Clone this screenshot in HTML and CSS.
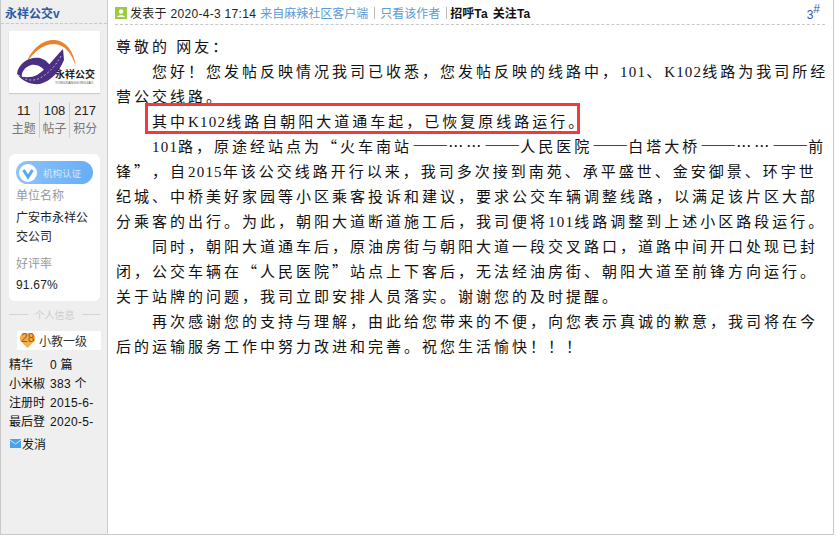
FILE: index.html
```html
<!DOCTYPE html>
<html lang="zh-CN">
<head>
<meta charset="utf-8">
<title>永祥公交</title>
<link rel="stylesheet" href="styles.css">
</head>
<body>
<div class="frame">
  <aside class="side">
    <div class="name">永祥公交v</div>
    <div class="avatar">
      <svg class="logo" width="91" height="62" viewBox="0 0 91 62">
        <path d="M17 33C22 18 34 8 46 9C57 10 65 20 67 36C63 22 55 13 45 13C34 13 24 21 17 33Z" fill="#e8832a"/>
        <path d="M8 43C9 32 21 25 31 27C38 29 42 34 44 41L38 43C34 36 28 33 22 34C16 36 12 41 13 46Z" fill="#4b2f83"/>
        <path d="M54 18L55 29C50 41 42 50 31 53C22 54 13 50 9 44C14 47 22 47 28 44C38 38 44 28 54 18Z" fill="#4b2f83"/>
        <path d="M52 25C46 36 38 44 29 48C24 50 18 49 14 47" fill="none" stroke="#d8d2e8" stroke-width="0.8" stroke-dasharray="2 2"/>
        <text class="logo-cn" x="46" y="47">永祥公交</text>
        <text class="logo-en" x="46" y="53">YONGXIANGGONGJIAO</text>
      </svg>
    </div>
    <div class="stats">
      <div class="stat"><span class="num">11</span><span class="lab">主题</span></div>
      <div class="stat"><span class="num">108</span><span class="lab">帖子</span></div>
      <div class="stat"><span class="num">217</span><span class="lab">积分</span></div>
    </div>
    <div class="card">
      <div class="pill">
        <svg class="v" width="18" height="18" viewBox="0 0 18 18">
          <circle cx="9" cy="9" r="9" fill="#fff"/>
          <path d="M4.5 6L9 13L13.5 6" fill="none" stroke="#5aa6f2" stroke-width="3"/>
        </svg>
        <span>机构认证</span>
      </div>
      <div class="key">单位名称</div>
      <div class="val">广安市永祥公交公司</div>
      <div class="key">好评率</div>
      <div class="val">91.67%</div>
    </div>
    <div class="divider"><span>个人信息</span></div>
    <div class="level">
      <svg class="medal" width="17" height="17" viewBox="0 0 16 16"><path d="M1 4L4 1H12L15 4V8L8 15L1 8Z" fill="#f0b050"/></svg>
      <span class="lv-num">28</span>
      <span class="lv-name">小教一级</span>
    </div>
    <ul class="facts">
      <li><span class="fk">精华</span><span>0 篇</span></li>
      <li><span class="fk">小米椒</span><span>383 个</span></li>
      <li><span class="fk">注册时</span><span>2015-6-</span></li>
      <li><span class="fk">最后登</span><span>2020-5-</span></li>
    </ul>
    <div class="msg">
      <svg width="11" height="9" viewBox="0 0 11 9"><rect width="11" height="9" fill="#4aa3e8"/><path d="M0 1L5.5 5L11 1" fill="none" stroke="#cfe8fb"/></svg>
      <span>发消</span>
    </div>
  </aside>
  <main class="post">
    <header class="meta">
      <svg class="usericon" width="12" height="12" viewBox="0 0 12 12"><rect width="12" height="12" fill="#9ccc3c"/><circle cx="6" cy="4.5" r="2.2" fill="#fff"/><path d="M2 10C3 7.5 9 7.5 10 10Z" fill="#fff"/></svg>
      <span class="when">发表于 2020-4-3 17:14</span>
      <a class="link">来自麻辣社区客户端</a>
      <i class="pipe"></i>
      <a class="link">只看该作者</a>
      <i class="pipe"></i>
      <b>招呼Ta</b>
      <b class="follow">关注Ta</b>
      <span class="floor">3<sup>#</sup></span>
    </header>
    <div class="body">
      <p class="plain">尊敬的 网友：</p>
      <p>您好！您发帖反映情况我司已收悉，您发帖反映的线路中，<span class="lat">101</span>、<span class="lat">K102</span>线路为我司所经营公交线路。</p>
      <p>其中<span class="lat">K102</span>线路自朝阳大道通车起，已恢复原线路运行。</p>
      <p><span class="lat">101</span>路，原途经站点为“火车南站<span class="dash">——</span>……<span class="dash">——</span>人民医院<span class="dash">——</span>白塔大桥<span class="dash">——</span>……<span class="dash">——</span>前锋”，自<span class="lat">2015</span>年该公交线路开行以来，我司多次接到南苑、承平盛世、金安御景、环宇世纪城、中桥美好家园等小区乘客投诉和建议，要求公交车辆调整线路，以满足该片区大部分乘客的出行。为此，朝阳大道断道施工后，我司便将<span class="lat">101</span>线路调整到上述小区路段运行。</p>
      <p>同时，朝阳大道通车后，原油房街与朝阳大道一段交叉路口，道路中间开口处现已封闭，公交车辆在“人民医院”站点上下客后，无法经油房街、朝阳大道至前锋方向运行。关于站牌的问题，我司立即安排人员落实。谢谢您的及时提醒。</p>
      <p>再次感谢您的支持与理解，由此给您带来的不便，向您表示真诚的歉意，我司将在今后的运输服务工作中努力改进和完善。祝您生活愉快！！！</p>
      <div class="mark"></div>
    </div>
  </main>
</div>
</body>
</html>
```
FILE: styles.css
```css
* { box-sizing: border-box; }
html, body { margin: 0; padding: 0; }
body {
  width: 836px;
  height: 536px;
  background: #fff;
  overflow: hidden;
  font-family: "Liberation Sans", "Noto Sans CJK SC", sans-serif;
  font-size: 12px;
  color: #111;
}
.frame {
  display: flex;
  width: 834px;
  height: 535px;
  border-left: 1px solid #c9c9c9;
  border-right: 1px solid #c9c9c9;
  border-bottom: 1px solid #c9c9c9;
}
.side {
  flex: none;
  width: 107px;
  background: #efefef;
  border-right: 1px solid #cdcdcd;
  display: flex;
  flex-direction: column;
}
.name {
  height: 24px;
  padding: 7px 0 0 4px;
  line-height: 15px;
  font-weight: 700;
  color: #2a5caa;
  border-bottom: 1px dashed #c8c8c8;
}
.avatar {
  flex: none;
  margin: 7px 7px 0 8px;
  height: 62px;
  background: #fff;
  box-shadow: 0 1px 1px #ccc;
}
.logo { display: block; }
.logo-cn { font-size: 10px; font-weight: 700; fill: #222; font-family: "Noto Sans CJK SC", sans-serif; }
.logo-en { font-size: 3.4px; fill: #555; font-family: "Liberation Sans", sans-serif; }
.stats {
  flex: none;
  display: flex;
  margin: 9px 7px 0 8px;
  height: 36px;
}
.stat {
  flex: 1;
  display: flex;
  flex-direction: column;
  align-items: center;
  border-left: 1px solid #cfcfcf;
}
.stat:first-child { border-left: 0; }
.num { font-size: 13px; line-height: 18px; color: #222; }
.lab { font-size: 12px; line-height: 18px; color: #777; }
.card {
  flex: none;
  margin: 16px 7px 0 8px;
  height: 147px;
  background: #fff;
  border-radius: 6px;
  padding: 7px 7px 0 7px;
}
.pill {
  display: flex;
  align-items: center;
  gap: 6px;
  height: 23px;
  padding-left: 3px;
  border-radius: 12px;
  background: linear-gradient(90deg, #8fc3fb, #66aef6);
  color: #d7e8fb;
  font-size: 9.5px;
}
.key { margin-top: 2px; line-height: 20px; color: #999; }
.val { margin-top: 3px; line-height: 19px; color: #222; width: 76px; }
.val:last-child { margin-top: 2px; letter-spacing: 0.2px; }
.val + .key { margin-top: 7px; }
.divider {
  flex: none;
  display: flex;
  align-items: center;
  gap: 7px;
  margin: 7px 7px 0 8px;
  height: 13px;
  color: #ccc;
  font-size: 10px;
}
.divider::before, .divider::after {
  content: "";
  flex: 1;
  height: 1px;
  background: #d4d4d4;
}
.level {
  flex: none;
  position: relative;
  display: flex;
  align-items: center;
  margin: 10px 6px 0 16px;
  height: 19px;
  background: #fff;
  padding-left: 22px;
  color: #333;
}
.medal { position: absolute; left: 2px; top: 1px; }
.lv-num { position: absolute; left: 4px; top: 0; line-height: 14px; font-size: 12px; color: #a3590b; }
.facts { list-style: none; margin: 6px 0 0; padding: 0 0 0 8px; }
.facts li { display: flex; height: 19px; line-height: 19px; white-space: nowrap; overflow: hidden; width: 90px; letter-spacing: 0.3px; }
.fk { flex: none; width: 41px; letter-spacing: 0; }
.msg { display: flex; align-items: center; gap: 1px; margin: 2px 0 0 9px; height: 19px; }
.post { flex: 1; min-width: 0; padding: 0 8px 0 7px; }
.meta {
  display: flex;
  align-items: center;
  height: 25px;
  padding-top: 1px;
  border-bottom: 1px dashed #c8c8c8;
  white-space: nowrap;
  color: #222;
}
.usericon { margin-right: 3px; }
.when { letter-spacing: 0.3px; }
.link { color: #5a9bd8; margin-left: 4px; }
.pipe { width: 1px; height: 12px; background: #bbb; margin: 0 5px 0 6px; }
.pipe + .link { margin-left: 0; }
.link + .pipe + b { margin-left: -2px; }
.meta b { font-weight: 700; color: #111; letter-spacing: 0.1px; }
.meta .follow { margin-left: 5px; }
.floor { margin-left: auto; margin-right: 5px; color: #3355bb; padding-top: 4px; }
.floor sup { font-size: 12px; line-height: 0; vertical-align: 6px; }
.body {
  position: relative;
  margin-right: -5px;
  padding: 8px 0 0 1px;
  font-family: "Noto Sans CJK SC", sans-serif;
  font-size: 15px;
  letter-spacing: 3px;
  line-height: 25px;
  color: #111;
  text-spacing-trim: space-all;
}
.body p { margin: 0; text-indent: 36px; }
.body p.plain { text-indent: 0; }
.lat { font-family: "Liberation Serif", serif; font-size: 15px; letter-spacing: 1.2px; line-height: 1; }
.dash { font-size: 18px; letter-spacing: 0; line-height: 1; }
.mark {
  position: absolute;
  left: 30px;
  top: 78px;
  width: 435px;
  height: 31px;
  border: 3px solid #f23a3a;
  pointer-events: none;
}
```
